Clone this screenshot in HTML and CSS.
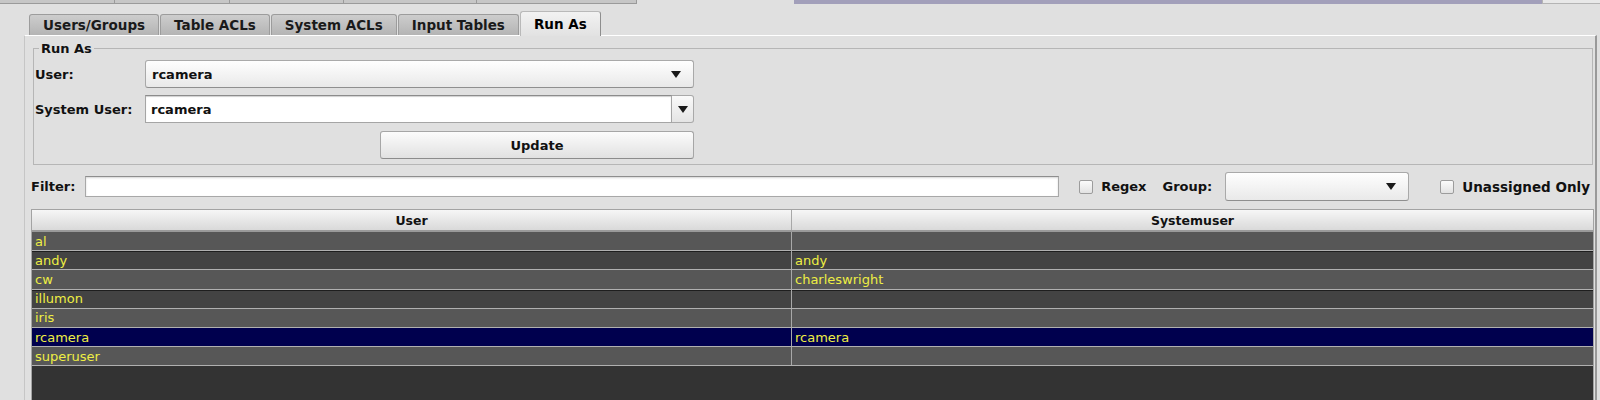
FILE: index.html
```html
<!DOCTYPE html>
<html lang="en">
<head>
  <meta charset="UTF-8" />
  <title>Run As - ACL Editor</title>
  <link rel="stylesheet" href="styles.css">
</head>
<body>

  <!-- cut-off strip of the outer window -->
  <div class="topstrip">
    <div class="stub-tabs">
      <span class="stub"></span>
      <span class="stub"></span>
      <span class="stub"></span>
      <span class="stub"></span>
      <span class="stub"></span>
    </div>
    <div class="stub-bar"></div>
    <div class="stub-end"></div>
  </div>

  <div class="tabpane">
    <div class="tabbar">
      <div class="tab">Users/Groups</div>
      <div class="tab">Table ACLs</div>
      <div class="tab">System ACLs</div>
      <div class="tab">Input Tables</div>
      <div class="tab active">Run As</div>
    </div>

    <div class="pane">
      <fieldset class="group">
        <legend>Run As</legend>
        <div class="form-grid">
          <label class="lbl">User:</label>
          <div class="combo wide">
            <span class="combo-text">rcamera</span>
            <svg class="arrow" width="10" height="7" viewBox="0 0 10 7"><path d="M0 0H10L5 7Z"/></svg>
          </div>

          <label class="lbl">System User:</label>
          <div class="edit-combo wide">
            <div class="edit-field">rcamera</div>
            <div class="edit-btn">
              <svg class="arrow" width="10" height="7" viewBox="0 0 10 7"><path d="M0 0H10L5 7Z"/></svg>
            </div>
          </div>

          <button class="update-btn">Update</button>
        </div>
      </fieldset>

      <div class="filter-row">
        <label class="lbl">Filter:</label>
        <input type="text" class="filter-input">
        <span class="check"></span>
        <span class="lbl check-lbl">Regex</span>
        <span class="lbl group-lbl">Group:</span>
        <div class="combo group-combo">
          <span class="combo-text"></span>
          <svg class="arrow" width="10" height="7" viewBox="0 0 10 7"><path d="M0 0H10L5 7Z"/></svg>
        </div>
        <span class="check unassigned"></span>
        <span class="lbl check-lbl unassigned-lbl">Unassigned Only</span>
      </div>

      <div class="table-wrap">
        <table class="user-table">
          <thead>
            <tr>
              <th class="col-user">User</th>
              <th>Systemuser</th>
            </tr>
          </thead>
          <tbody id="user-list">
          </tbody>
        </table>
      </div>
    </div>
  </div>

  <script>
    const users = [
      { user: 'al', sys: '' },
      { user: 'andy', sys: 'andy' },
      { user: 'cw', sys: 'charleswright' },
      { user: 'illumon', sys: '' },
      { user: 'iris', sys: '' },
      { user: 'rcamera', sys: 'rcamera', selected: true },
      { user: 'superuser', sys: '' }
    ];

    const list = document.getElementById('user-list');
    users.forEach((u, i) => {
      let cls = i % 2 ? 'dark' : 'light';
      if (u.selected) cls = 'selected';
      list.innerHTML += `<tr class="${cls}"><td>${u.user}</td><td>${u.sys}</td></tr>`;
    });
  </script>
</body>
</html>
```

FILE: styles.css
```css
body {
  margin: 0;
  background: #e0e0e0;
  font-family: 'DejaVu Sans', 'Liberation Sans', sans-serif;
  font-size: 13px;
  color: #111;
  overflow: hidden;
  height: 400px;
}

/* top strip */
.topstrip {
  display: flex;
  height: 4px;
}

.stub-tabs {
  display: grid;
  grid-template-columns: 115px 115px 114px 133px 160px;
  width: 637px;
}

.stub {
  background: #c6c6c6;
  border-right: 1px solid #9a9a9a;
  border-bottom: 1px solid #9a9a9a;
}

.stub-bar {
  width: 748px;
  margin-left: 157px;
  background: #a29fba;
}

.stub-end {
  flex: 1;
  background: #e8e8e8;
  border-bottom: 1px solid #b4b4b4;
  border-left: 1px solid #b4b4b4;
}

/* tabs */
.tabpane {
  margin: 0 3px 0 24px;
}

.tabbar {
  display: flex;
  align-items: flex-end;
  height: 31px;
  padding-left: 5px;
}

.tab {
  height: 20px;
  padding: 0 13px;
  margin-right: 1px;
  display: flex;
  align-items: center;
  font-weight: bold;
  font-size: 13.5px;
  color: #1a1a1a;
  background: linear-gradient(#cdcdcd, #b4b4b4);
  border: 1px solid #9c9c9c;
  border-bottom: none;
  border-radius: 3px 3px 0 0;
}

.tab.active {
  height: 24px;
  margin-bottom: -1px;
  position: relative;
  background: linear-gradient(#f2f2f2, #e2e2e2);
  border-color: #b9b9b9;
  border-right-color: #8e8e8e;
  color: #000;
}

.pane {
  border-top: 1px solid #fff;
  border-left: 1px solid #c6c6c6;
  border-right: 2px solid #999;
  height: 400px;
}

/* Run As group */
.group {
  margin: 5px 2px 0 8px;
  padding: 4px 0 5px 1px;
  border: 1px solid #b6b6b6;
  min-width: 0;
}

.group legend {
  font-weight: bold;
  padding: 0 2px;
  margin-left: 4px;
  line-height: 15px;
}

.form-grid {
  display: grid;
  grid-template-columns: 110px 235px 314px;
  row-gap: 7px;
  align-items: center;
}

.lbl {
  font-weight: bold;
  white-space: nowrap;
}

.wide {
  grid-column: 2 / 4;
}

.combo {
  height: 26px;
  display: flex;
  align-items: center;
  justify-content: space-between;
  padding: 0 12px 0 6px;
  background: linear-gradient(#fefefe, #e9e9e9);
  border: 1px solid #a9a9a9;
  border-bottom-color: #8f8f8f;
  border-radius: 3px;
}

.combo-text {
  font-weight: bold;
}

.arrow {
  fill: #1a1a1a;
}

.edit-combo {
  height: 28px;
  display: flex;
}

.edit-field {
  flex: 1;
  display: flex;
  align-items: center;
  padding-left: 5px;
  font-weight: bold;
  background: #fff;
  border: 1px solid #a5a5a5;
  border-top-color: #8c8c8c;
  box-shadow: inset 0 1px 1px #d0d0d0;
}

.edit-btn {
  width: 21px;
  display: flex;
  align-items: center;
  justify-content: center;
  background: linear-gradient(#fafafa, #e4e4e4);
  border: 1px solid #a9a9a9;
  border-left: none;
  border-radius: 0 3px 3px 0;
}

.update-btn {
  grid-column: 3;
  height: 28px;
  margin-top: 1px;
  font-family: inherit;
  font-size: 13px;
  font-weight: bold;
  color: #111;
  background: linear-gradient(#fcfcfc, #e1e1e1);
  border: 1px solid #a6a6a6;
  border-bottom-color: #8c8c8c;
  border-radius: 3px;
}

/* filter row */
.filter-row {
  display: flex;
  align-items: center;
  height: 31px;
  margin-top: 6px;
  padding: 0 5px 0 6px;
}

.filter-input {
  flex: 1;
  height: 19px;
  margin: 0 20px 0 10px;
  padding: 0;
  border: 1px solid #a8a8a8;
  border-top-color: #8e8e8e;
  box-shadow: inset 0 1px 2px #d6d6d6;
  outline: none;
}

.check {
  width: 12px;
  height: 12px;
  border: 1px solid #9c9c9c;
  border-radius: 2px;
  background: linear-gradient(#fbfbfb, #e2e2e2);
  flex-shrink: 0;
}

.check-lbl {
  margin-left: 8px;
}

.unassigned-lbl {
  font-size: 13.5px;
}

.group-lbl {
  margin-left: 16px;
}

.group-combo {
  width: 164px;
  height: 27px;
  margin-left: 13px;
}

.unassigned {
  margin-left: 31px;
}

/* table */
.table-wrap {
  margin: 7px 1px 0 6px;
  border: 1px solid #a3a3a3;
  background: #333;
  height: 200px;
}

.user-table {
  width: 100%;
  border-collapse: collapse;
  table-layout: fixed;
}

.user-table th {
  height: 20px;
  padding: 0;
  font-weight: bold;
  font-size: 12.5px;
  background: linear-gradient(#f6f6f6, #d9d9d9);
  border-right: 1px solid #a8a8a8;
  border-bottom: 2px solid #9a9a9a;
}

.user-table th:last-child {
  border-right: none;
}

.user-table .col-user {
  width: 759px;
}

.user-table td {
  height: 18.2px;
  padding: 0 0 0 3px;
  color: #eeee44;
  font-size: 13px;
  border-right: 1px solid #a8a8a8;
  border-bottom: 1px solid #b0b0b0;
}

.user-table td:last-child {
  border-right: none;
}

.user-table tr.light td {
  background: #575757;
}

.user-table tr.dark td {
  background: #434343;
  box-shadow: inset 0 1px 0 #1e1e1e;
}

.user-table tr.selected td {
  background: #00004e;
}
```
